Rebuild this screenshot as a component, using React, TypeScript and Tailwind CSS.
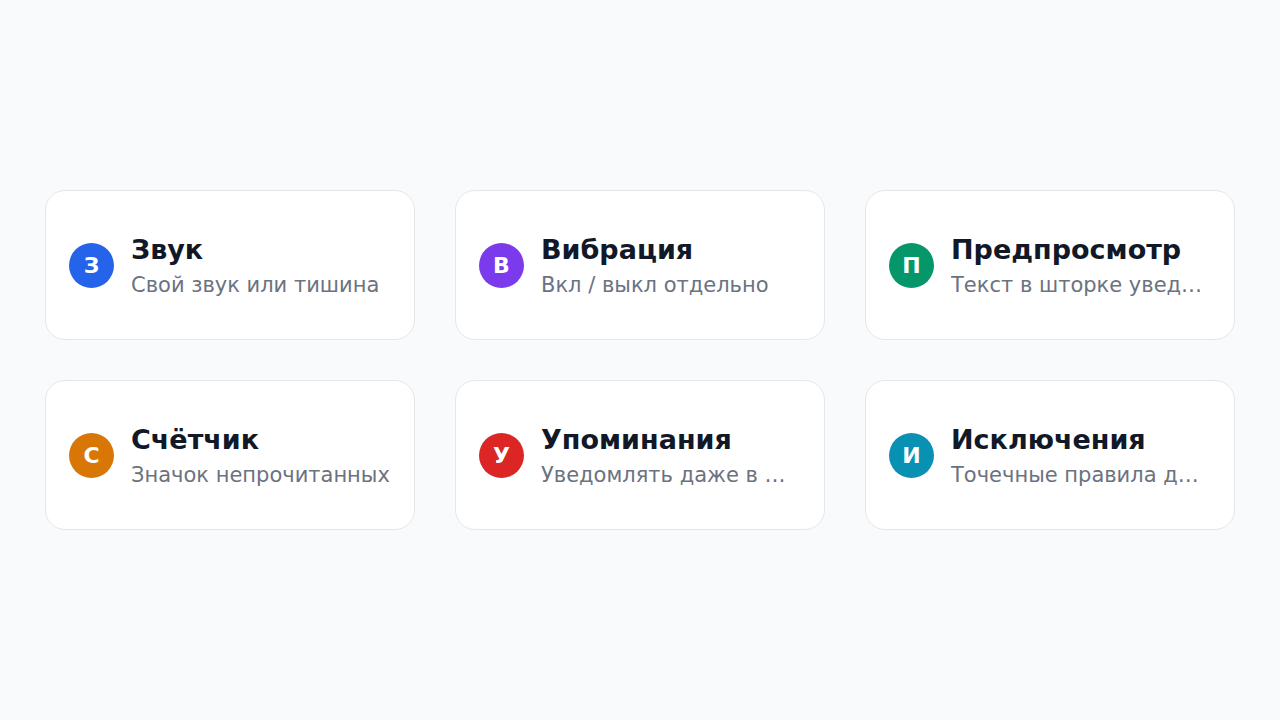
import React from "react";

type Item = { letter: string; title: string; subtitle: string; color: string };

const items: Item[] = [
  { letter: "З", title: "Звук", subtitle: "Свой звук или тишина", color: "bg-[#2563eb]" },
  { letter: "В", title: "Вибрация", subtitle: "Вкл / выкл отдельно", color: "bg-[#7c3aed]" },
  { letter: "П", title: "Предпросмотр", subtitle: "Текст в шторке уведомлений", color: "bg-[#059669]" },
  { letter: "С", title: "Счётчик", subtitle: "Значок непрочитанных", color: "bg-[#d97706]" },
  { letter: "У", title: "Упоминания", subtitle: "Уведомлять даже в шумных чатах", color: "bg-[#dc2626]" },
  { letter: "И", title: "Исключения", subtitle: "Точечные правила для чатов", color: "bg-[#0891b2]" },
];

function Card({ item }: { item: Item }) {
  return (
    <div className="h-[150px] rounded-[20px] border border-[#e5e7eb] bg-white px-[22px] flex items-center gap-[17px]">
      <div
        className={`${item.color} ml-[1px] w-[45px] h-[45px] shrink-0 rounded-full flex items-center justify-center text-white font-bold text-[22px]`}
      >
        {item.letter}
      </div>
      <div className="min-w-0 mt-[3px] flex flex-col">
        <div className="text-[27px] leading-[32px] font-bold text-[#111827] truncate">{item.title}</div>
        <div className="mt-[5px] text-[21px] leading-[28px] text-[#6b7280] truncate">{item.subtitle}</div>
      </div>
    </div>
  );
}

export default function App() {
  return (
    <div
      className="min-h-screen w-full bg-[#f9fafb] flex items-center px-[45px]"
      style={{ fontFamily: '"DejaVu Sans", sans-serif' }}
    >
      <div className="grid grid-cols-3 gap-[40px] w-full">
        {items.map((it) => (
          <Card key={it.title} item={it} />
        ))}
      </div>
    </div>
  );
}
